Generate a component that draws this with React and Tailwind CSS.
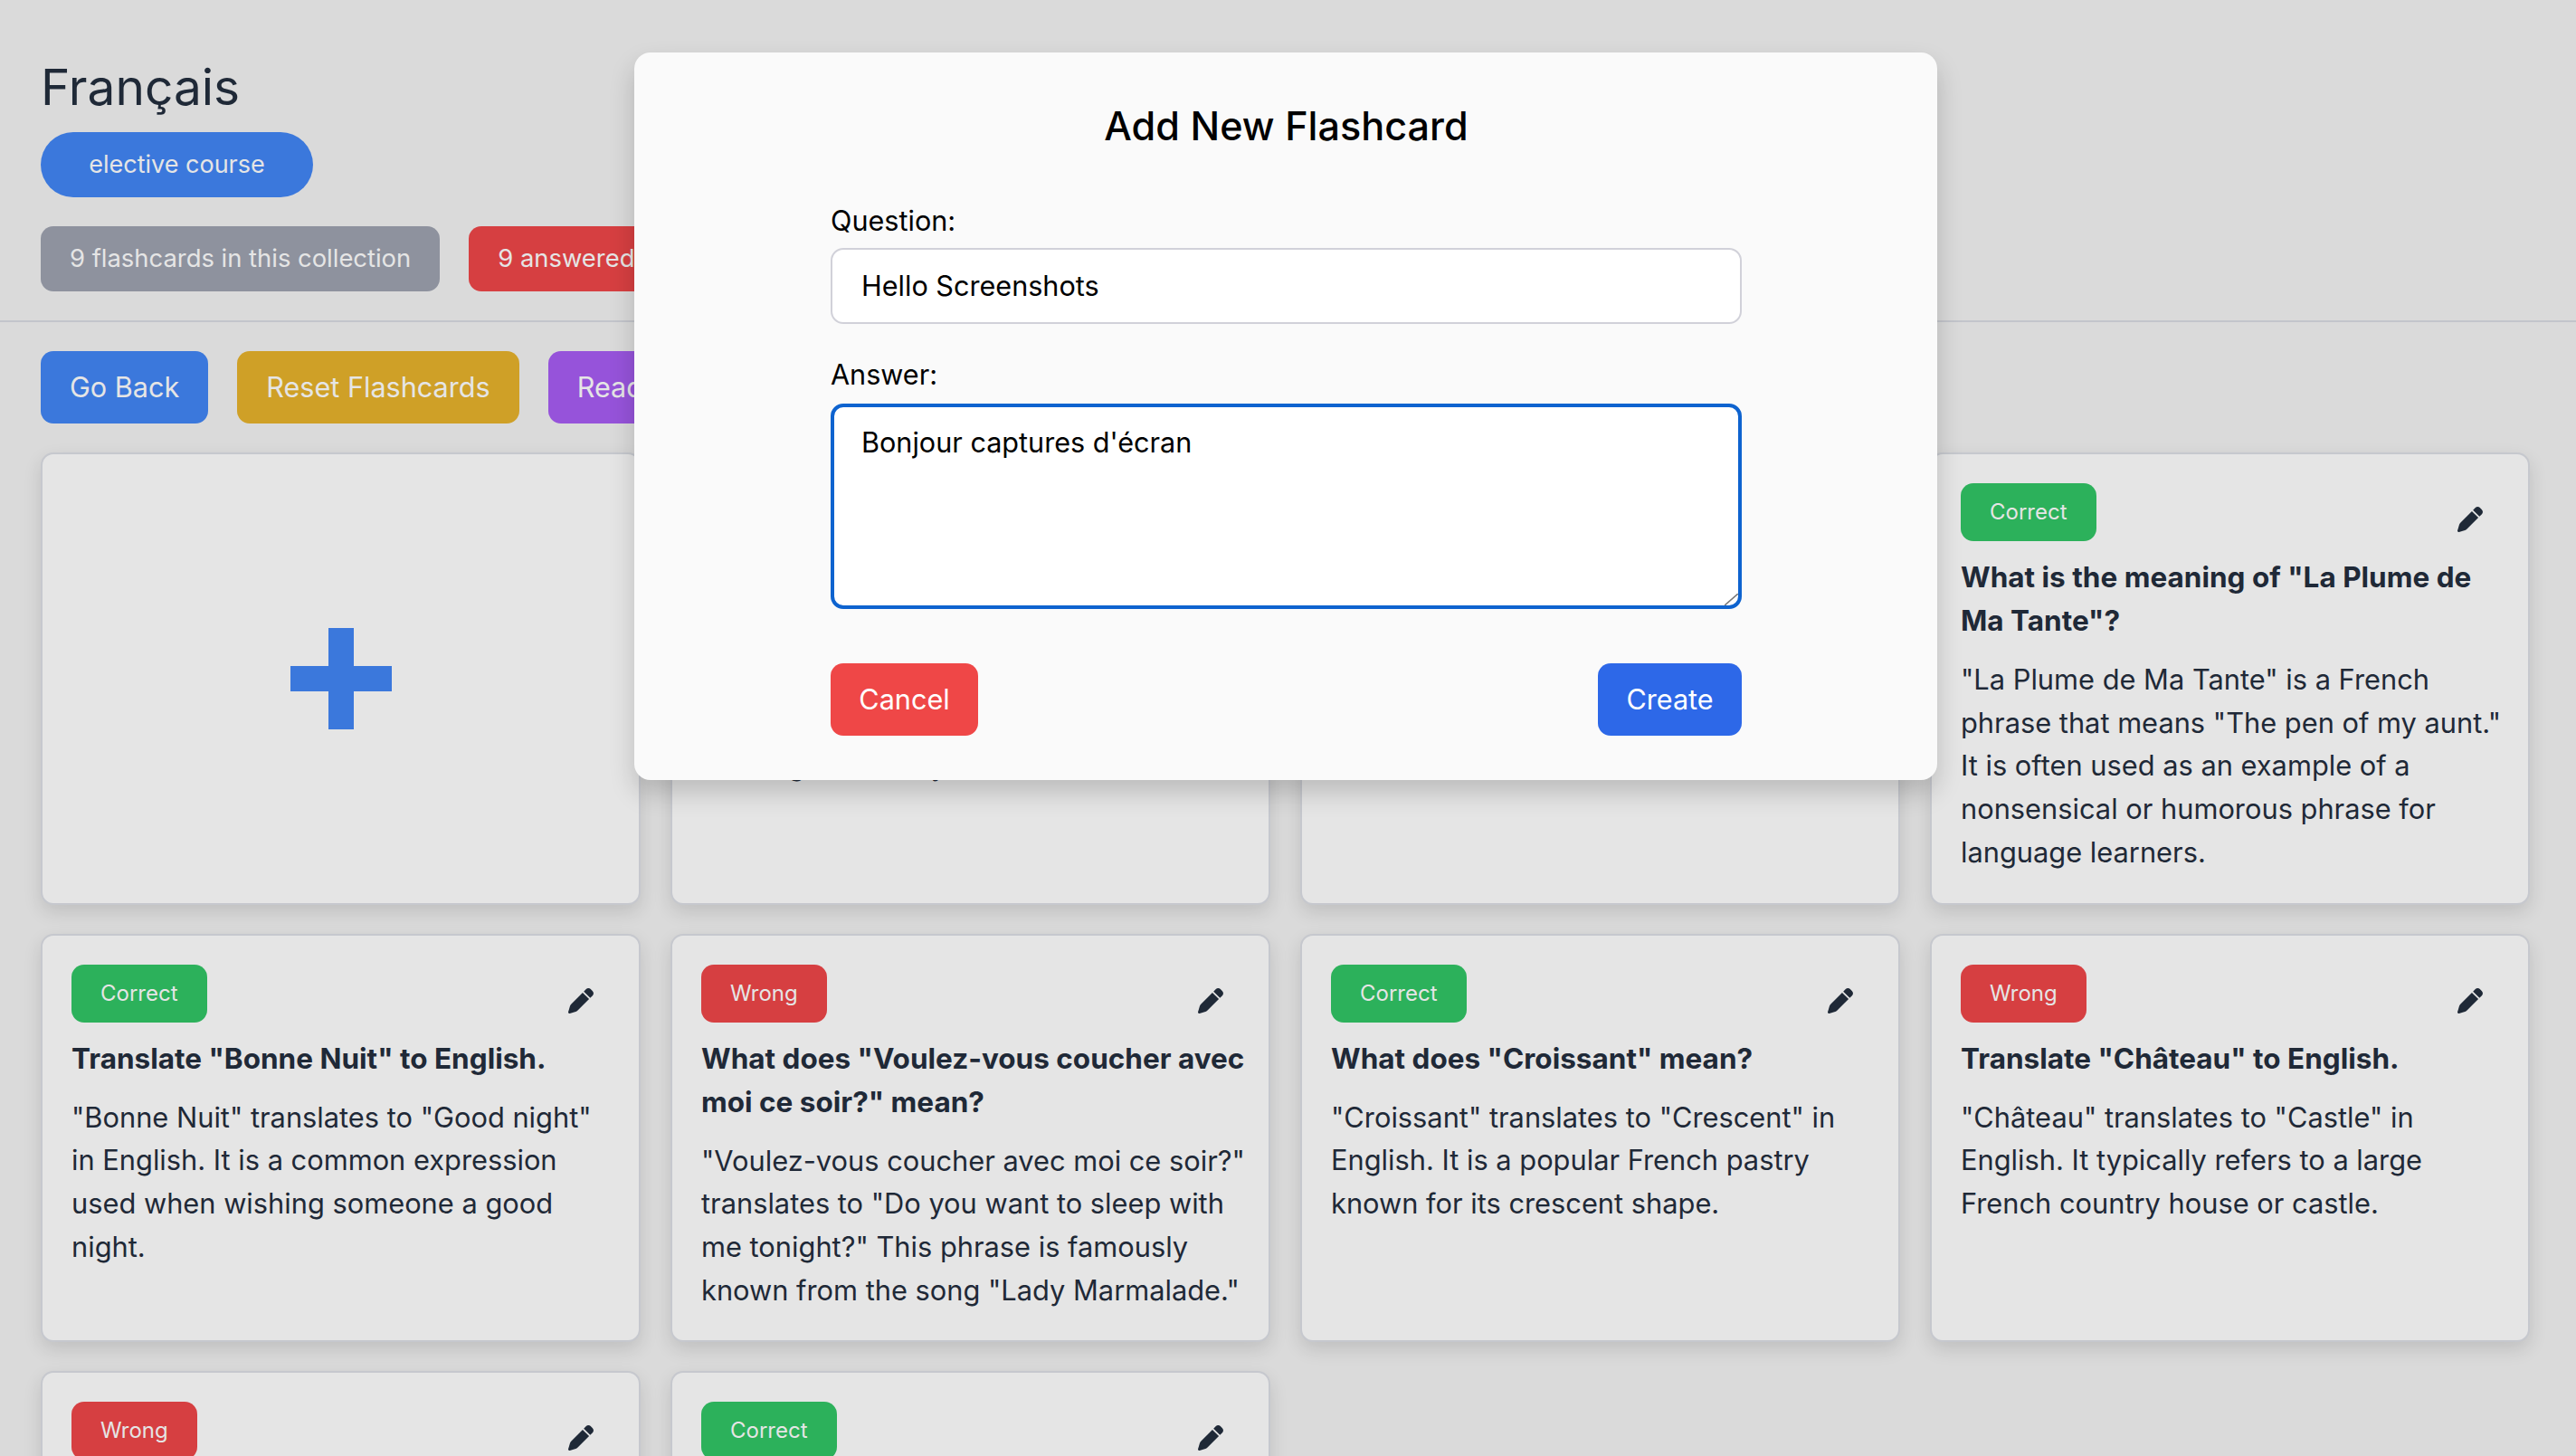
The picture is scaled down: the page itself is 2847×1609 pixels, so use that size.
import React from "react";

const FONT = "font-['Inter','Noto_Sans',sans-serif]";

function Pencil() {
  return (
    <svg viewBox="0 0 512 512" className="w-[28px] h-[28px] fill-[#1f2937]">
      <path d="M362.7 19.3L314.3 67.7 444.3 197.7l48.4-48.4c25-25 25-65.5 0-90.5L453.3 19.3c-25-25-65.5-25-90.5 0zm-71 71L58.6 323.5c-10.4 10.4-18 23.3-22.2 37.4L1 481.2C-1.5 489.7 .8 498.8 7 505s15.3 8.5 23.7 6.1l120.3-35.4c14.1-4.2 27-11.8 37.4-22.2L421.7 220.3 291.7 90.3z" />
    </svg>
  );
}

function Card({ status, q, a }) {
  const ok = status === "Correct";
  return (
    <div className="rounded-[14px] border-2 border-[#c6c8ce] bg-[#e5e5e5] px-[32px] pt-[32px] pb-[32px] shadow-[0_8px_20px_rgba(0,0,0,0.12)]">
      <div className="flex items-center justify-between">
        <span className={`rounded-[14px] px-[32px] h-[64px] flex items-center text-[24px] text-[#e5e5e5] ${ok ? "bg-[#2cb15b]" : "bg-[#d63f41]"}`}>{status}</span>
        <span className="mr-[18px] mt-[16px]"><Pencil /></span>
      </div>
      <h3 className="mt-[16px] -mr-[8px] text-[31.5px] leading-[48px] font-bold text-[#1f2937]">{q}</h3>
      <p className="mt-[17px] -mr-[10px] whitespace-pre-line text-[30.8px] leading-[47.7px] text-[#1f2937]">{a}</p>
    </div>
  );
}

const cards = [
  { status: "Wrong", q: 'Translate "Bonsoir" to English.', a: '"Bonsoir" translates to "Good evening"\nin English. It is a polite greeting for the\nlate hours of an\nevening or Sunday.' },
  { status: "Correct", q: 'What does "Merci" mean?', a: '"Merci" translates to "Thank you" in English. It is used to express gratitude.' },
  { status: "Correct", q: 'What is the meaning of "La Plume de Ma Tante"?', a: '"La Plume de Ma Tante" is a French phrase that means "The pen of my aunt." It is often used as an example of a nonsensical or humorous phrase for language learners.' },
  { status: "Correct", q: 'Translate "Bonne Nuit" to English.', a: '"Bonne Nuit" translates to "Good night" in English. It is a common expression used when wishing someone a good night.' },
  { status: "Wrong", q: 'What does "Voulez-vous coucher avec moi ce soir?" mean?', a: '"Voulez-vous coucher avec moi ce soir?" translates to "Do you want to sleep with me tonight?" This phrase is famously known from the song "Lady Marmalade."' },
  { status: "Correct", q: 'What does "Croissant" mean?', a: '"Croissant" translates to "Crescent" in English. It is a popular French pastry known for its crescent shape.' },
  { status: "Wrong", q: 'Translate "Château" to English.', a: '"Château" translates to "Castle" in English. It typically refers to a large French country house or castle.' },
  { status: "Wrong", q: 'Translate "Au revoir" to English.', a: '"Au revoir" translates to "Goodbye" in English.' },
  { status: "Correct", q: 'What does "Fromage" mean?', a: '"Fromage" translates to "Cheese" in English.' },
];

export default function App() {
  return (
    <div className={`relative h-screen overflow-hidden bg-[#dadada] text-[#1f2937] ${FONT}`}>
      <header className="border-b-2 border-[#c3c5cb] h-[356px] px-[45px] pt-[58px]">
        <h1 className="text-[55px] leading-[76px] font-normal">Français</h1>
        <span className="mt-[12px] inline-flex h-[72px] w-[301px] items-center justify-center rounded-full bg-[#3b78dc] text-[27px] text-[#e5e5e5]">elective course</span>
        <div className="mt-[32px] flex gap-[32px]">
          <span className="flex h-[72px] items-center rounded-[14px] bg-[#8e929e] px-[32px] text-[27.4px] text-[#e5e5e5]">9 flashcards in this collection</span>
          <span className="flex h-[72px] items-center rounded-[14px] bg-[#d63f41] px-[32px] text-[27.4px] text-[#e5e5e5]">9 answered</span>
        </div>
      </header>
      <main className="px-[45px] pt-[32px]">
        <div className="flex gap-[32px]">
          <button className="h-[80px] rounded-[14px] bg-[#3b78dc] px-[32px] text-[30.6px] text-[#e5e5e5]">Go Back</button>
          <button className="h-[80px] rounded-[14px] bg-[#cfa027] px-[32px] text-[30.6px] text-[#e5e5e5]">Reset Flashcards</button>
          <button className="h-[80px] rounded-[14px] bg-[#9653da] px-[32px] text-[30.6px] text-[#e5e5e5]">Read Flashcards</button>
        </div>
        <div className="mt-[32px] grid w-[2751px] grid-cols-4 gap-x-[33px] gap-y-[32px]">
          <div className="flex items-center justify-center rounded-[14px] border-2 border-[#c6c8ce] bg-[#e5e5e5] shadow-[0_8px_20px_rgba(0,0,0,0.12)]">
            <svg viewBox="0 0 112 112" className="w-[112px] h-[112px] fill-[#3b78dc]"><path d="M42 0h28v42h42v28H70v42H42V70H0V42h42z" /></svg>
          </div>
          {cards.map((c) => <Card key={c.q} {...c} />)}
        </div>
      </main>
      <div className="absolute left-[701px] top-[58px] w-[1440px] h-[804px] rounded-[18px] bg-[#fafafa] pl-[217px] pr-[216px] pt-[53px] text-black shadow-[0_14px_28px_rgba(0,0,0,0.18)]">
        <h2 className="text-center text-[43.2px] leading-[56px] font-medium">Add New Flashcard</h2>
        <label className="mt-[53px] block text-[30.6px] leading-[47px]">Question:</label>
        <div className="mt-[7px] flex h-[84px] items-center rounded-[14px] border-2 border-[#d1d1d9] bg-white px-[32px] text-[30.6px]">Hello Screenshots</div>
        <label className="mt-[32px] block text-[30.6px] leading-[47px]">Answer:</label>
        <div className="relative mt-[9px]">
          <textarea readOnly defaultValue="Bonjour captures d'écran" className="block h-[227px] w-full resize-none rounded-[14px] border-[4px] border-[#0e63cf] bg-white px-[30px] pt-[15px] text-[30.6px] leading-[47px] outline-none" />
          <svg viewBox="0 0 15 13" className="absolute bottom-[4px] right-[4px] h-[13px] w-[15px] stroke-[#777777]"><path d="M0 13L15 0" strokeWidth="1.6" fill="none" /></svg>
        </div>
        <div className="mt-[60px] flex justify-between">
          <button className="h-[80px] w-[163px] rounded-[14px] bg-[#ef4747] text-[30.6px] text-white">Cancel</button>
          <button className="h-[80px] w-[159px] rounded-[14px] bg-[#2d68e8] text-[30.6px] text-white">Create</button>
        </div>
      </div>
    </div>
  );
}
